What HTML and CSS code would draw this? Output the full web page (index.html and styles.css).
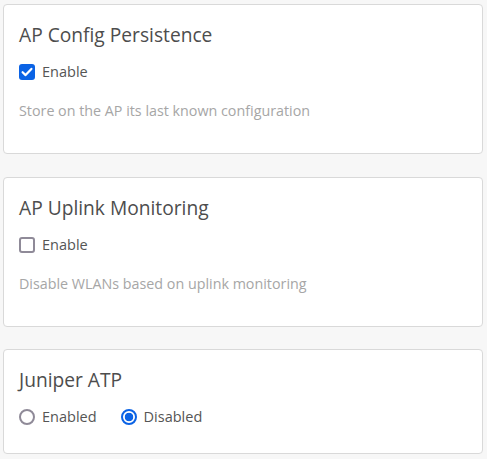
FILE: index.html
```html
<!DOCTYPE html>
<html>
<head>
<meta charset="utf-8">
<link rel="stylesheet" href="styles.css">
</head>
<body>
<div class="page">
  <section class="card card-tall">
    <h2 class="title">AP Config Persistence</h2>
    <label class="option">
      <span class="checkbox checked">
        <svg viewBox="0 0 16 16" width="16" height="16"><path d="M3.6 8.2 L6.6 11.1 L12.4 4.9" fill="none" stroke="#fff" stroke-width="2.2" stroke-linecap="round" stroke-linejoin="round"/></svg>
      </span>
      <span class="label">Enable</span>
    </label>
    <p class="desc">Store on the AP its last known configuration</p>
  </section>
  <section class="card card-tall">
    <h2 class="title">AP Uplink Monitoring</h2>
    <label class="option">
      <span class="checkbox"></span>
      <span class="label">Enable</span>
    </label>
    <p class="desc">Disable WLANs based on uplink monitoring</p>
  </section>
  <section class="card card-short">
    <h2 class="title">Juniper ATP</h2>
    <div class="radios">
      <label class="option">
        <span class="radio"></span>
        <span class="label">Enabled</span>
      </label>
      <label class="option">
        <span class="radio selected"></span>
        <span class="label">Disabled</span>
      </label>
    </div>
  </section>
</div>
</body>
</html>
```
FILE: styles.css
```css
* { box-sizing: border-box; }
html, body { margin: 0; padding: 0; background: #f7f7f7; }
body { font-family: "Open Sans", "Noto Sans", sans-serif; }
.page {
  display: flex;
  flex-direction: column;
  gap: 22.5px;
  padding: 4px 4px 0 3px;
}
.card {
  background: #fff;
  border: 1px solid #d9d9d9;
  border-radius: 4px;
  padding: 17px 15px 0 15px;
}
.card-tall { height: 150px; }
.card-short { height: 105px; }
.title {
  margin: 0;
  font-size: 19.2px;
  line-height: 26px;
  font-weight: 400;
  color: #4d4d4d;
}
.option {
  display: flex;
  align-items: center;
  gap: 7px;
}
.card .option { margin-top: 14px; }
.radios { display: flex; gap: 24px; margin-top: 14px; }
.radios .option { margin-top: 0; }
.label {
  font-size: 14.5px;
  line-height: 20px;
  color: #555;
}
.checkbox {
  width: 16px; height: 16px;
  border: 2px solid #8f8a98;
  border-radius: 3px;
  display: flex;
  align-items: center;
  justify-content: center;
  flex: none;
}
.checkbox.checked {
  background: #0b63e5;
  border: none;
}
.radio {
  width: 16px; height: 16px;
  border: 2px solid #8f8a98;
  border-radius: 50%;
  flex: none;
  background: #fff;
}
.radio.selected {
  border-color: #0b63e5;
  background: radial-gradient(circle, #0b63e5 0 4px, #fff 4.6px);
}
.desc {
  margin: 19px 0 0 0;
  font-size: 14.3px;
  line-height: 20px;
  color: #a6a6a6;
}
```
